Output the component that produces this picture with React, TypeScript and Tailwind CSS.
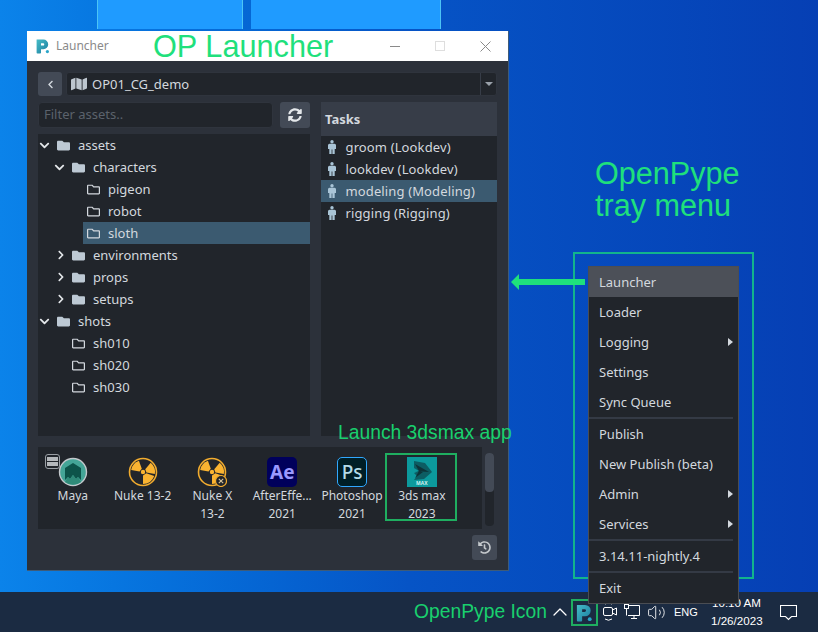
import { ChevronUp, Volume2 } from 'lucide-react'
import {
    FaChevronDown,
    FaChevronLeft,
    FaChevronRight,
    FaFolder,
    FaHistory,
    FaMap,
    FaRegFolder,
    FaSyncAlt,
} from 'react-icons/fa'

const treeRows = [
    { name: 'assets', indent: 'ml-0', arrow: 'down', solid: true },
    { name: 'characters', indent: 'ml-[15px]', arrow: 'down', solid: true },
    { name: 'pigeon', indent: 'ml-[30px]', arrow: '', solid: false },
    { name: 'robot', indent: 'ml-[30px]', arrow: '', solid: false },
    { name: 'sloth', indent: 'ml-[30px]', arrow: '', solid: false, selected: true },
    { name: 'environments', indent: 'ml-[15px]', arrow: 'right', solid: true },
    { name: 'props', indent: 'ml-[15px]', arrow: 'right', solid: true },
    { name: 'setups', indent: 'ml-[15px]', arrow: 'right', solid: true },
    { name: 'shots', indent: 'ml-0', arrow: 'down', solid: true },
    { name: 'sh010', indent: 'ml-[15px]', arrow: '', solid: false },
    { name: 'sh020', indent: 'ml-[15px]', arrow: '', solid: false },
    { name: 'sh030', indent: 'ml-[15px]', arrow: '', solid: false },
]

const tasks = [
    { name: 'groom (Lookdev)' },
    { name: 'lookdev (Lookdev)' },
    { name: 'modeling (Modeling)', selected: true },
    { name: 'rigging (Rigging)' },
]

const OpLogo = ({ size, id }: { size: number; id: string }) => (
    <svg width={size} height={size} viewBox="0 0 20 20">
        <defs>
            <linearGradient id={id} x1="0" y1="0" x2="1" y2="1">
                <stop offset="0" stopColor="#45bcc6" />
                <stop offset="1" stopColor="#1b7ca0" />
            </linearGradient>
        </defs>
        <path
            d="M2 2h8.5a6 6 0 0 1 0 12H7.5v4.5a1 1 0 0 1-1 1H3a1 1 0 0 1-1-1zM7.5 6.5v3h2.6a1.5 1.5 0 0 0 0-3z"
            fill={`url(#${id})`}
            fillRule="evenodd"
        />
        <circle cx="15.5" cy="17" r="2" fill="#2aa5c9" />
    </svg>
)

const MaleIcon = () => (
    <svg width="8" height="14" viewBox="0 0 8 14" fill="#a9c4d6">
        <circle cx="4" cy="1.7" r="1.7" />
        <path d="M1.5 3.8h5A1.5 1.5 0 0 1 8 5.3V9H6.7v5H4.4V9.5h-.8V14H1.3V9H0V5.3a1.5 1.5 0 0 1 1.5-1.5z" />
    </svg>
)

const sector = (from: number, to: number) => {
    const pt = (a: number, r: number) => {
        const rad = (a * Math.PI) / 180
        return `${(15 + r * Math.cos(rad)).toFixed(2)} ${(15 + r * Math.sin(rad)).toFixed(2)}`
    }
    return `M${pt(from, 3.5)} L${pt(from, 12)} A12 12 0 0 1 ${pt(to, 12)} L${pt(to, 3.5)} Z`
}

const NukeIcon = ({ x }: { x?: boolean }) => (
    <svg width="30" height="30" viewBox="0 0 30 30">
        <circle cx="15" cy="15" r="13.5" fill="#22252b" stroke="#f2ac2e" strokeWidth="1.6" />
        <path d={sector(-170, -110)} fill="#fbb431" />
        <path d={sector(-50, 10)} fill="#fbb431" />
        <path d={sector(20, 90)} fill="#fbb431" />
        <circle cx="15" cy="15" r="2.2" fill="#fbb431" />
        {x ? (
            <>
                <circle cx="24" cy="24" r="5.5" fill="#22252b" stroke="#f2ac2e" strokeWidth="1.2" />
                <path d="M21.8 21.8l4.4 4.4M26.2 21.8l-4.4 4.4" stroke="#d8c59a" strokeWidth="1.1" />
            </>
        ) : null}
    </svg>
)

const MayaIcon = () => (
    <svg width="30" height="30" viewBox="0 0 30 30">
        <circle cx="15" cy="15" r="13.5" fill="#44a597" stroke="#c3c8cc" strokeWidth="1.4" />
        <path d="M7 23V11l8-5 8 5v12l-3-3-2 2-3-4-3 4-2-2z" fill="#0d544a" />
        <path d="M7 25l3-5 2 2 3-4 3 4 2-2 3 5a13 13 0 0 1-16 0z" fill="#2f8a78" />
    </svg>
)

const MaxIcon = () => (
    <svg width="30" height="30" viewBox="0 0 30 30">
        <rect width="30" height="30" fill="#0c9a9d" />
        <path d="M7 4l11 2 7 9-8 7-10 1 3-4-3-3 5-2-5-3z" fill="#0c5d63" />
        <path d="M8 7l14 8-14-1 8 1-8 6 4-7z" fill="#0d3338" />
    </svg>
)

const apps = [
    { lines: ['Maya'], icon: <MayaIcon /> },
    { lines: ['Nuke 13-2'], icon: <NukeIcon /> },
    { lines: ['Nuke X', '13-2'], icon: <NukeIcon x /> },
    {
        lines: ['AfterEffe...', '2021'],
        icon: (
            <div className="w-[30px] h-[30px] rounded-[5px] bg-[#00005b] flex items-center justify-center text-[#9999ff] font-bold text-[19px] leading-none">
                Ae
            </div>
        ),
    },
    {
        lines: ['Photoshop', '2021'],
        icon: (
            <div className="w-[30px] h-[30px] rounded-[5px] bg-[#001e26] border border-[#31a8ff] flex items-center justify-center text-[#b5dbe8] font-medium text-[19px] leading-none">
                Ps
            </div>
        ),
    },
    {
        lines: ['3ds max', '2023'],
        icon: (
            <div className="relative w-[30px] h-[30px]">
                <MaxIcon />
                <span className="absolute left-0 right-0 bottom-[1px] text-center text-[5px] leading-[6px] font-bold text-[#cfeeee]">
                    MAX
                </span>
            </div>
        ),
    },
]

const menuTop = [
    { name: 'Loader' },
    { name: 'Logging', sub: true },
    { name: 'Settings' },
    { name: 'Sync Queue' },
]
const menuMid = [
    { name: 'Publish' },
    { name: 'New Publish (beta)' },
    { name: 'Admin', sub: true },
    { name: 'Services', sub: true },
]

const MenuRow = ({ name, sub, hover }: { name: string; sub?: boolean; hover?: boolean }) => (
    <div className={`h-[30px] flex items-center justify-between pl-[10px] pr-[5px] ${hover ? 'bg-[#4c5058]' : ''}`}>
        <span className="pt-[2px]">{name}</span>
        {sub ? (
            <span className="border-y-[4px] border-y-transparent border-l-[5px] border-l-[#d3d8de]" />
        ) : null}
    </div>
)

const Separator = () => <div className="h-[2px] bg-[#343a45] mr-[5px]" />

const App = () => {
    return (
        <div className="relative w-[818px] h-[632px] overflow-hidden flex flex-col bg-gradient-to-r from-[#0b83ea] via-[#0654c6] to-[#063fb4] font-['Noto_Sans',sans-serif] text-[13px] text-[#d3d8de]">
            {/* desktop logo panes behind the window */}
            <div className="flex gap-[8px] ml-[97px] h-[29px]">
                <div className="w-[146px] bg-[#1f9bff] border-x border-[#4cc4f5]" />
                <div className="w-[190px] bg-[#1f9bff] border-r border-[#4cc4f5]" />
            </div>
            <div className="flex-1" />

            {/* launcher window */}
            <div className="absolute left-[27px] top-[31px] w-[482px] h-[540px] flex flex-col bg-[#2c313a] border-r border-b border-[#3e5b78]">
                <div className="relative h-[30px] shrink-0 bg-white flex items-center pl-[8px] text-[12px] text-[#8a8a8a]">
                    <OpLogo size={16} id="op-title" />
                    <span className="ml-[5px]">Launcher</span>
                    <div className="ml-auto flex items-center gap-[35px] pr-[17px]">
                        <div className="w-[10px] h-[1px] bg-[#8a8a8a]" />
                        <div className="w-[10px] h-[10px] border border-[#dedede]" />
                        <svg width="11" height="11" viewBox="0 0 11 11">
                            <path d="M.5.5l10 10M10.5.5l-10 10" stroke="#8a8a8a" strokeWidth="1" />
                        </svg>
                    </div>
                    <span className="absolute left-[126px] top-[-2px] font-['Liberation_Sans',sans-serif] text-[30.7px] leading-[36px] text-[#1fe07c]">
                        OP Launcher
                    </span>
                </div>

                <div className="flex-1 flex flex-col px-[11px] pt-[11px]">
                    <div className="flex gap-[4px] h-[24px]">
                        <div className="w-[24px] rounded-[3px] bg-[#434a56] flex items-center justify-center">
                            <FaChevronLeft size={9} color="#d3d8de" />
                        </div>
                        <div className="flex-1 flex items-center rounded-[3px] bg-[#21252b] border border-[#2f343d] pl-[4px]">
                            <FaMap size={16} color="#bdc6cf" />
                            <span className="ml-[5px] pt-[2px] flex-1">OP01_CG_demo</span>
                            <div className="w-[16px] h-full border-l border-[#373d48] flex items-center justify-center">
                                <span className="border-x-[4px] border-x-transparent border-t-[4px] border-t-[#9aa1aa]" />
                            </div>
                        </div>
                    </div>

                    <div className="flex gap-[11px] mt-[6px] h-[334px]">
                        <div className="w-[272px] flex flex-col">
                            <div className="flex gap-[7px] h-[26px]">
                                <div className="flex-1 rounded-[4px] bg-[#21252b] border border-[#2f343d] flex items-center pl-[5px] text-[#5b626c]">
                                    Filter assets..
                                </div>
                                <div className="w-[30px] rounded-[3px] bg-[#434a56] flex items-center justify-center">
                                    <FaSyncAlt size={14} color="#e4e7ea" />
                                </div>
                            </div>
                            <div className="mt-[6px] flex-1 bg-[#21252b]">
                                {treeRows.map((row) => (
                                    <div key={row.name} className={`h-[22px] flex items-center ${row.indent}`}>
                                        <div className="w-[15px] pl-[1px] flex justify-start">
                                            {row.arrow === 'down' ? (
                                                <FaChevronDown size={11} color="#e4e7ea" />
                                            ) : null}
                                            {row.arrow === 'right' ? (
                                                <FaChevronRight size={10} color="#e4e7ea" className="ml-[2px]" />
                                            ) : null}
                                        </div>
                                        <div
                                            className={`h-full flex-1 flex items-center pl-[4px] gap-[8px] ${row.selected ? 'bg-[#3b5a70]' : ''}`}
                                        >
                                            {row.solid ? (
                                                <FaFolder size={13} color="#bdc9d4" />
                                            ) : (
                                                <FaRegFolder size={13} color="#d3d8de" />
                                            )}
                                            <span className="pt-[2px]">{row.name}</span>
                                        </div>
                                    </div>
                                ))}
                            </div>
                        </div>

                        <div className="flex-1 flex flex-col bg-[#21252b]">
                            <div className="h-[34px] bg-[#373d48] flex items-center pl-[4px] pt-[2px] font-bold">
                                Tasks
                            </div>
                            {tasks.map((task) => (
                                <div
                                    key={task.name}
                                    className={`h-[22px] flex items-center pl-[7px] gap-[10px] ${task.selected ? 'bg-[#3b5a70]' : ''}`}
                                >
                                    <MaleIcon />
                                    <span className="pt-[2px] tracking-[0.13px] -ml-[0.5px]">{task.name}</span>
                                </div>
                            ))}
                        </div>
                    </div>

                    <div className="flex mt-[11px] h-[82px]">
                        <div className="relative w-[444px] bg-[#21252b] flex items-start pt-[10px] text-center">
                            <div className="absolute left-[7px] top-[7px] w-[15px] h-[15px] rounded-[3px] bg-[#21252b] border border-[#9a9fa5] flex flex-col justify-center gap-[1px] px-[1px] z-10">
                                <div className="h-[4px] bg-[#b4b8bc]" />
                                <div className="h-[4px] bg-[#b4b8bc]" />
                            </div>
                            {apps.map((app) => (
                                <div key={app.lines[0]} className="w-[70px] flex flex-col items-center -ml-[0.2px]">
                                    {app.icon}
                                    <div className="text-[12px] leading-[18px]">
                                        {app.lines.map((line) => (
                                            <div key={line} className="whitespace-nowrap">
                                                {line}
                                            </div>
                                        ))}
                                    </div>
                                </div>
                            ))}
                        </div>
                        <div className="ml-[3px] mt-[6px] w-[9px] h-[73px] rounded-[4px] bg-[#21252b]">
                            <div className="h-[39px] rounded-[4px] bg-[#434a56]" />
                        </div>
                    </div>

                    <div className="flex justify-end mt-[6px]">
                        <div className="w-[25px] h-[25px] rounded-[3px] bg-[#434a56] flex items-center justify-center">
                            <FaHistory size={13} color="#c4c8cc" />
                        </div>
                    </div>
                </div>
            </div>

            {/* annotations */}
            <div className="absolute left-[385px] top-[453px] w-[72px] h-[68px] border-2 border-[#1fae60]" />
            <div className="absolute left-[338px] top-[421px] font-['Liberation_Sans',sans-serif] text-[19.3px] leading-[24px] text-[#19d06e]">
                Launch 3dsmax app
            </div>
            <div className="absolute left-[595px] top-[157px] font-['Liberation_Sans',sans-serif] text-[30.6px] leading-[32px] text-[#1fe07c]">
                OpenPype
                <br />
                tray menu
            </div>
            <div className="absolute left-[573px] top-[252px] w-[181px] h-[327px] border-2 border-[#12b48c]" />
            <svg className="absolute left-[511px] top-[274px]" width="76" height="16" viewBox="0 0 76 16">
                <path d="M0 8l8-8v5h66v6H8v5z" fill="#1fe07c" />
            </svg>

            {/* tray menu */}
            <div className="absolute left-[588px] top-[266px] z-20 w-[151px] h-[338px] bg-[#21252b] border border-[#4a4d53]">
                <MenuRow name="Launcher" hover />
                {menuTop.map((item) => (
                    <MenuRow key={item.name} name={item.name} sub={item.sub} />
                ))}
                <Separator />
                {menuMid.map((item) => (
                    <MenuRow key={item.name} name={item.name} sub={item.sub} />
                ))}
                <Separator />
                <MenuRow name="3.14.11-nightly.4" />
                <Separator />
                <MenuRow name="Exit" />
            </div>

            {/* taskbar */}
            <div className="relative h-[40px] shrink-0 bg-[#1b2b42] flex items-center pl-[414px] text-white">
                <span className="font-['Liberation_Sans',sans-serif] text-[19.3px] text-[#19d06e] w-[134px] whitespace-nowrap">
                    OpenPype Icon
                </span>
                <ChevronUp size={24} strokeWidth={1.3} />
                <div className="-ml-[1px] w-[27px] h-[27px] border-2 border-[#1fae60] flex items-center justify-center">
                    <OpLogo size={19} id="op-tray" />
                </div>
                <svg className="ml-[5px]" width="14" height="22" viewBox="0 0 14 22" fill="none" stroke="#fff" strokeWidth="1">
                    <rect x=".5" y="6.5" width="9" height="8" rx="1.5" />
                    <path d="M9.5 9l4-2v7l-4-2" />
                    <path d="M2 3a6 6 0 0 1 7 0M2 18a6 6 0 0 0 7 0" />
                </svg>
                <svg className="ml-[7px]" width="16" height="18" viewBox="0 0 16 18" fill="none" stroke="#fff" strokeWidth="1">
                    <path d="M4 2.5h11.5v10H4M7 15.5h6M10 12.5v3" />
                    <rect x=".5" y="1.5" width="4" height="4" />
                    <path d="M2.5 5.5v7" />
                </svg>
                <Volume2 size={19} strokeWidth={1.1} className="ml-[7px]" />
                <span className="ml-[8px] w-[24px] text-[11px] font-['Liberation_Sans',sans-serif]">ENG</span>
                <div className="ml-[13px] w-[51px] text-center font-['Liberation_Sans',sans-serif] text-[11.6px] leading-[18px] whitespace-nowrap">
                    <div className="flex justify-center">10:10 AM</div>
                    <div>1/26/2023</div>
                </div>
                <svg className="ml-[18px]" width="17" height="17" viewBox="0 0 17 17" fill="none" stroke="#fff" strokeWidth="1.1">
                    <path d="M.5 1.5h16v11h-5l-3 3-3-3h-5z" />
                </svg>
            </div>
        </div>
    )
}

export default App
